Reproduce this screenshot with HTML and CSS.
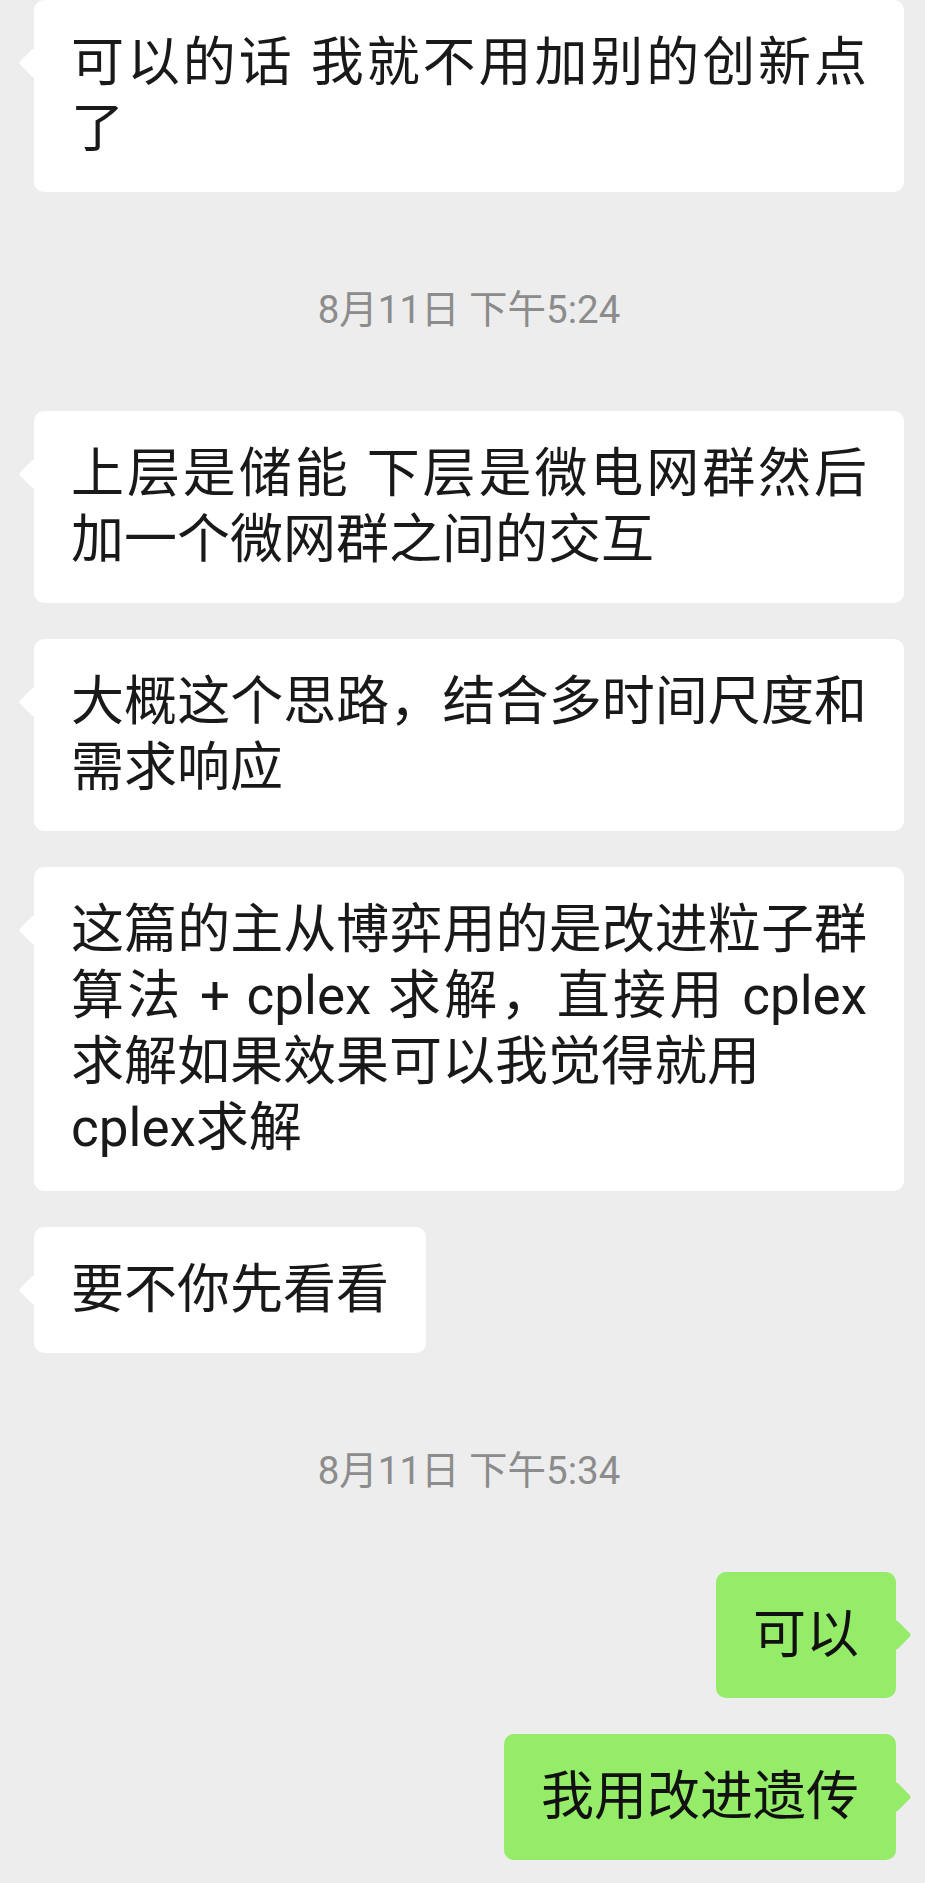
FILE: index.html
```html
<!DOCTYPE html>
<html lang="zh-CN">
<head>
    <meta charset="UTF-8">
    <meta name="viewport" content="width=device-width, initial-scale=1.0">
    <title>聊天记录</title>
    <link rel="stylesheet" href="styles.css">
</head>
<body>

    <div class="chat">
        <div class="row left">
            <div class="bubble">可以的话 我就不用加别的创新点了</div>
        </div>

        <div class="time">8月11日 下午5:24</div>

        <div class="row left">
            <div class="bubble">上层是储能 下层是微电网群然后加一个微网群之间的交互</div>
        </div>
        <div class="row left">
            <div class="bubble">大概这个思路，结合多时间尺度和需求响应</div>
        </div>
        <div class="row left">
            <div class="bubble">这篇的主从博弈用的是改进粒子群算法 + cplex 求解，直接用 cplex 求解如果效果可以我觉得就用<br>cplex求解</div>
        </div>
        <div class="row left">
            <div class="bubble">要不你先看看</div>
        </div>

        <div class="time">8月11日 下午5:34</div>

        <div class="row right">
            <div class="bubble">可以</div>
        </div>
        <div class="row right">
            <div class="bubble">我用改进遗传</div>
        </div>
    </div>

</body>
</html>
```

FILE: styles.css
```css
* {
    box-sizing: border-box;
}
html, body {
    margin: 0;
    padding: 0;
    background: #ededed;
    font-family: Roboto, "Noto Sans CJK SC", sans-serif;
}
.chat {
    display: flex;
    flex-direction: column;
    gap: 36px;
    padding: 0 21px 20px 34px;
}
.row {
    display: flex;
}
.row.right {
    justify-content: flex-end;
    padding-right: 8px;
}
.bubble {
    position: relative;
    max-width: 870px;
    padding: 30px 37px;
    font-size: 53px;
    line-height: 66px;
    color: #191919;
    text-align: justify;
    background: #fff;
    border-radius: 10px;
}
/* little arrow on the side of each bubble */
.bubble::before {
    content: "";
    position: absolute;
    top: 52px;
    width: 22px;
    height: 22px;
    background: inherit;
    border-radius: 3px;
    transform: rotate(45deg);
}
.left .bubble::before {
    left: -11px;
}
.right .bubble {
    background: #95ec69;
    color: #111;
}
.right .bubble::before {
    right: -11px;
}
.time {
    margin: 57px 0 40px;
    text-align: center;
    font-size: 38.5px;
    line-height: 50px;
    color: #8c8c8c;
}
```
